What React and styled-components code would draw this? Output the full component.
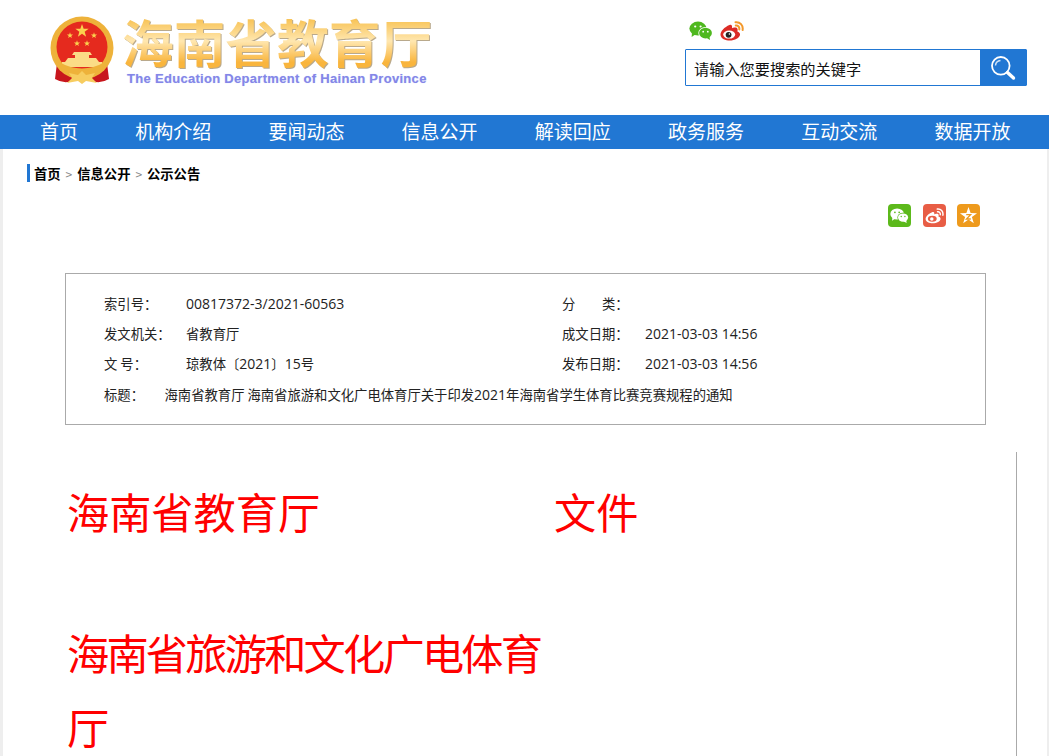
import React from 'react';
import styled, { createGlobalStyle } from 'styled-components';

const CJK = '"Noto Sans CJK SC", "Noto Sans", sans-serif';
const BLUE = '#2177d3';

const GlobalStyle = createGlobalStyle`
  html, body {
    margin: 0;
    padding: 0;
    background: #fff;
  }
  body {
    font-family: ${CJK};
    color: #222;
  }
`;

const Page = styled.div`
  width: 1049px;
  height: 756px;
  overflow: hidden;
  background: #eeeeee;
`;

const Header = styled.header`
  display: flex;
  justify-content: space-between;
  height: 115px;
  padding: 0 22px 0 49px;
  box-sizing: border-box;
  background: #fff;
`;

const Logo = styled.div`
  display: flex;
  align-items: flex-start;
  gap: 7px;
  padding-top: 15px;
`;

const LogoText = styled.div`
  display: flex;
  flex-direction: column;
`;

const LogoTitle = styled.div`
  font-family: ${CJK};
  font-size: 51.7px;
  font-weight: 700;
  line-height: 56px;
  height: 56px;
  margin-top: -2px;
  white-space: nowrap;
  background: linear-gradient(180deg, #f8c458 12%, #ffe7b0 50%, #f9b53d 88%);
  -webkit-background-clip: text;
  background-clip: text;
  color: transparent;
  filter: drop-shadow(1px 1px 0 #b9a98c);
`;

const LogoEnglish = styled.div`
  font-family: "Liberation Sans", Arial, sans-serif;
  font-size: 13px;
  font-weight: 700;
  line-height: 16px;
  margin: 2px 0 0 5px;
  letter-spacing: 0.3px;
  white-space: nowrap;
  color: #8486e8;
  text-shadow: 0 0 1px #c3cdf6;
`;

const HeaderRight = styled.div`
  display: flex;
  flex-direction: column;
  width: 342px;
  padding-top: 21px;
`;

const SocialRow = styled.div`
  display: flex;
  gap: 7px;
  height: 28px;
  padding-left: 4px;
`;

const SearchBox = styled.form`
  display: flex;
  height: 37px;
  box-sizing: border-box;
  border: 1px solid ${BLUE};
  border-radius: 1px;
`;

const SearchInput = styled.input`
  flex: 1;
  min-width: 0;
  padding: 0 0 0 8px;
  border: none;
  outline: none;
  font-family: ${CJK};
  font-size: 15.2px;
  color: #111;

  &::placeholder {
    color: #111;
    opacity: 1;
  }
`;

const SearchButton = styled.button`
  display: flex;
  align-items: center;
  justify-content: center;
  width: 46px;
  padding: 0;
  border: none;
  background: ${BLUE};
  cursor: pointer;
`;

const Nav = styled.nav`
  display: flex;
  gap: 57.2px;
  height: 34px;
  padding-left: 40px;
  background: ${BLUE};
`;

const NavItem = styled.a`
  font-size: 19px;
  line-height: 31px;
  color: #fff;
  white-space: nowrap;
`;

const Main = styled.main`
  height: 607px;
  margin: 0 2px 0 3px;
  overflow: hidden;
  background: #fff;
`;

const Crumbs = styled.div`
  display: flex;
  align-items: center;
  height: 17px;
  margin: 15px 0 0 24px;
  padding: 1px 0 0 4px;
  border-left: 3px solid ${BLUE};
  font-size: 13.33px;
  line-height: 16px;
  font-weight: 700;
  color: #000;
`;

const CrumbSep = styled.span`
  width: 16.5px;
  text-align: center;
  font-size: 12px;
  font-weight: 400;
  color: #888;
`;

const ShareRow = styled.div`
  display: flex;
  justify-content: flex-end;
  gap: 11.5px;
  margin-top: 22px;
  padding-right: 67px;
`;

const ShareIcon = styled.a`
  display: flex;
  align-items: center;
  justify-content: center;
  width: 23px;
  height: 23px;
  border-radius: 4px;
  background: ${({ $bg }) => $bg};
`;

const InfoBox = styled.section`
  width: 921px;
  height: 152px;
  margin: 46px 0 0 62px;
  padding: 15px 38px 0;
  box-sizing: border-box;
  border: 1px solid #aaaaaa;
  font-family: ${CJK};
  font-size: 13.33px;
  line-height: 20px;
  color: #222;
`;

const InfoGrid = styled.div`
  display: grid;
  grid-template-columns: 82px 376px 83px 1fr;
  grid-auto-rows: 30px;
  align-items: center;
`;

const TitleRow = styled.div`
  display: grid;
  grid-template-columns: 60.5px 1fr;
  align-items: center;
  height: 30px;
  margin-top: 1px;
`;

const Num = styled.span`
  font-family: "Open Sans", sans-serif;
  font-size: 14px;
`;

const Article = styled.article`
  width: 949px;
  height: 320px;
  margin: 27px 0 0 64px;
  border-right: 1px solid #aaaaaa;
`;

const DocHead = styled.div`
  display: grid;
  grid-template-columns: 487px 1fr;
  padding-top: 22px;
`;

const DocName = styled.div`
  font-size: 42.2px;
  line-height: 74px;
  color: #ff0000;
  letter-spacing: ${({ $tight }) => ($tight ? '-2.75px' : '0')};
  margin-top: ${({ $tight }) => ($tight ? '67px' : '0')};
`;

// five pointed star centred on cx, cy
const starPoints = (cx, cy, r) => {
  const pts = [];
  for (let i = 0; i < 10; i++) {
    const len = i % 2 ? r * 0.4 : r;
    const a = (Math.PI / 5) * i - Math.PI / 2;
    pts.push(`${(cx + len * Math.cos(a)).toFixed(2)},${(cy + len * Math.sin(a)).toFixed(2)}`);
  }
  return pts.join(' ');
};

const EmblemIcon = () => (
  <svg width="66" height="72" viewBox="0 0 66 72">
    <path d="M8 48 L6 64 Q14 69 24 66 L33 62 L42 66 Q52 69 60 64 L58 48 Z" fill="#c8161d" />
    <circle cx="33" cy="33" r="31.5" fill="#eeb23a" />
    <circle cx="33" cy="32" r="25.5" fill="#e52a1e" />
    <polygon points={starPoints(33, 16, 7)} fill="#fbd24e" />
    <polygon points={starPoints(21, 20.5, 3.2)} fill="#fbd24e" />
    <polygon points={starPoints(45, 20.5, 3.2)} fill="#fbd24e" />
    <polygon points={starPoints(28, 28.5, 3.2)} fill="#fbd24e" />
    <polygon points={starPoints(38, 28.5, 3.2)} fill="#fbd24e" />
    <path d="M25 37 L41 37 L43 40 L40 40 L40 43 L47 43 L50 47 L53 47 L53 52 L13 52 L13 47 L16 47 L19 43 L26 43 L26 40 L23 40 Z" fill="#fbdc86" />
    <path d="M8 50 Q33 70 58 50 L56 47 Q33 60 10 47 Z" fill="#eeb23a" />
    <path d="M20 58 L29 60 L33 56 L37 60 L46 58 L43 63 L48 68 L37 66 L33 69 L29 66 L18 68 L23 63 Z" fill="#f7cd60" />
  </svg>
);

const WechatIcon = ({ main = '#4fb81f', back = '#4fb81f', gap = '#fff', eye = '#fff', size = 24 }) => (
  <svg width={size} height={size * 0.8} viewBox="0 0 24 19">
    <ellipse cx="9" cy="7.5" rx="8.6" ry="7" fill={back} />
    <path d="M3 12 L2.6 16 L7 13 Z" fill={back} />
    <ellipse cx="16.5" cy="12" rx="7.2" ry="6" fill={gap} />
    <ellipse cx="16.5" cy="12" rx="6.4" ry="5.3" fill={main} />
    <path d="M20.5 15.5 L21 18.8 L17 16.5 Z" fill={main} />
    <circle cx="6.2" cy="5.4" r="1.1" fill={eye} />
    <circle cx="11.6" cy="5.4" r="1.1" fill={eye} />
    <circle cx="14.2" cy="10.6" r="0.9" fill={eye} />
    <circle cx="18.8" cy="10.6" r="0.9" fill={eye} />
  </svg>
);

const WeiboIcon = () => (
  <svg width="24" height="20" viewBox="0 0 24 20">
    <path d="M9.5 4 C4.5 6 0.2 10.5 0.5 14 C1 18.4 7 19.9 11.5 19.4 C17 18.8 20.4 15.5 20 13 C19.7 11.2 18 10.8 17.4 10.4 C18 8.6 17.6 7 16 6.6 C14.4 6.2 12.4 7.2 12 7.2 C12.4 5.6 12 3.2 9.5 4 Z" fill="#dc2b26" />
    <ellipse cx="9.2" cy="13.6" rx="6" ry="4" fill="#fff" />
    <circle cx="8.6" cy="13.8" r="2.9" fill="#222" />
    <circle cx="9.4" cy="13" r="0.8" fill="#fff" />
    <path d="M15.5 1.2 C20 0.6 23.4 4.4 22.6 9 M15.8 4.6 C18 4.2 19.7 6 19.3 8.4" fill="none" stroke="#f3982a" strokeWidth="2" strokeLinecap="round" />
  </svg>
);

const WeiboWhiteIcon = () => (
  <svg width="19" height="16" viewBox="0 0 24 20">
    <path d="M9.5 5 C4.5 7 0.5 11 0.8 14 C1.2 18 7 19.6 11.5 19 C17 18.4 20 15.5 19.6 13 C19.3 11.4 17.6 11 17 10.6 C17.6 9 17.3 7.6 16 7.2 C14.4 6.8 12 7.8 11.6 7.8 C12 6.4 11.8 4.2 9.5 5 Z" fill="#fff" />
    <ellipse cx="9.2" cy="13.6" rx="5.6" ry="3.8" fill="#e85d45" />
    <circle cx="8.6" cy="13.8" r="2.2" fill="#fff" />
    <path d="M15.5 1.2 C20 0.6 23.4 4.4 22.6 9 M15.8 4.6 C18 4.2 19.7 6 19.3 8.4" fill="none" stroke="#fff" strokeWidth="1.8" strokeLinecap="round" />
  </svg>
);

const StarIcon = () => (
  <svg width="19" height="19" viewBox="0 0 19 19">
    <polygon points={starPoints(9.5, 10, 9)} fill="#fff" />
    <path d="M7.2 8.6 H11.6 L7.4 13 H11.8" fill="none" stroke="#ee9a1c" strokeWidth="1.3" />
  </svg>
);

const SearchIcon = () => (
  <svg width="26" height="26" viewBox="0 0 26 26">
    <circle cx="10.8" cy="10.8" r="8.8" fill="none" stroke="#fff" strokeWidth="1.8" />
    <path d="M5.5 10.5 A5.5 5.5 0 0 1 10.5 5.5" fill="none" stroke="#cfe2f6" strokeWidth="1.5" />
    <path d="M17.5 17.5 L23.5 23" stroke="#fff" strokeWidth="3.4" strokeLinecap="round" />
  </svg>
);

const navItems = ['首页', '机构介绍', '要闻动态', '信息公开', '解读回应', '政务服务', '互动交流', '数据开放'];

const App = () => (
  <Page>
    <GlobalStyle />
    <Header>
      <Logo>
        <EmblemIcon />
        <LogoText>
          <LogoTitle>海南省教育厅</LogoTitle>
          <LogoEnglish>The Education Department of Hainan Province</LogoEnglish>
        </LogoText>
      </Logo>
      <HeaderRight>
        <SocialRow>
          <WechatIcon />
          <WeiboIcon />
        </SocialRow>
        <SearchBox onSubmit={(e) => e.preventDefault()}>
          <SearchInput placeholder="请输入您要搜索的关键字" />
          <SearchButton type="submit" aria-label="搜索">
            <SearchIcon />
          </SearchButton>
        </SearchBox>
      </HeaderRight>
    </Header>

    <Nav>
      {navItems.map((item) => (
        <NavItem key={item}>{item}</NavItem>
      ))}
    </Nav>

    <Main>
      <Crumbs>
        首页<CrumbSep>&gt;</CrumbSep>信息公开<CrumbSep>&gt;</CrumbSep>公示公告
      </Crumbs>

      <ShareRow>
        <ShareIcon $bg="#5cb91b">
          <WechatIcon size={19} main="#fff" back="#fff" gap="#5cb91b" eye="#5cb91b" />
        </ShareIcon>
        <ShareIcon $bg="#e85d45">
          <WeiboWhiteIcon />
        </ShareIcon>
        <ShareIcon $bg="#ee9a1c">
          <StarIcon />
        </ShareIcon>
      </ShareRow>

      <InfoBox>
        <InfoGrid>
          <span>索引号：</span>
          <Num>00817372-3/2021-60563</Num>
          <span>分　　类：</span>
          <span />
          <span>发文机关：</span>
          <span>省教育厅</span>
          <span>成文日期：</span>
          <Num>2021-03-03 14:56</Num>
          <span>文 号：</span>
          <span>琼教体〔<Num>2021</Num>〕<Num>15</Num>号</span>
          <span>发布日期：</span>
          <Num>2021-03-03 14:56</Num>
        </InfoGrid>
        <TitleRow>
          <span>标题：</span>
          <span>海南省教育厅 海南省旅游和文化广电体育厅关于印发<Num>2021</Num>年海南省学生体育比赛竞赛规程的通知</span>
        </TitleRow>
      </InfoBox>

      <Article>
        <DocHead>
          <div>
            <DocName>海南省教育厅</DocName>
            <DocName $tight>海南省旅游和文化广电体育厅</DocName>
          </div>
          <DocName>文件</DocName>
        </DocHead>
      </Article>
    </Main>
  </Page>
);

export default App;
